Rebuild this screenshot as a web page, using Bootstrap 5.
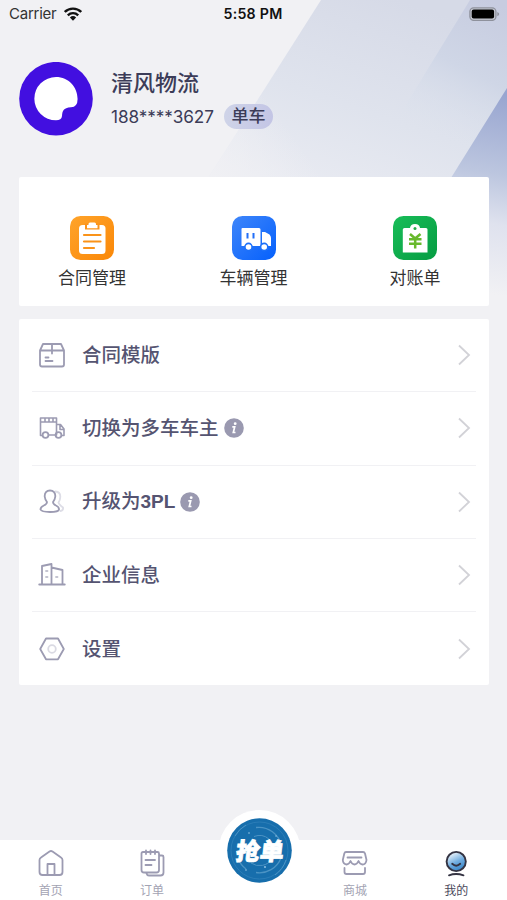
<!DOCTYPE html>
<html lang="zh-CN">
<head>
<meta charset="utf-8">
<meta name="viewport" content="width=device-width, initial-scale=1">
<title>我的</title>
<link href="https://cdn.jsdelivr.net/npm/bootstrap@5.3.0/dist/css/bootstrap.min.css" rel="stylesheet">
<style>
  body { font-family: "Liberation Sans", "Noto Sans CJK SC", sans-serif; background: #f1f1f4; color: #3c3c58; }
  svg { display: block; flex: none; }
  .screen { height: 900px; }
  .backdrop { z-index: 0; }
  .status { height: 28px; font: 15px/28px Inter, sans-serif; color: #333; padding: 0 7px 0 9px; }
  .clock { font-weight: 600; font-size: 14.2px; color: #111; left: 0; right: 1px; letter-spacing: .25px; }
  .profile { height: 149px; padding: 34px 19px 0; }
  .who { padding-left: 18px; padding-top: 5px; }
  .who-name { font-size: 22px; line-height: 33px; font-weight: 500; }
  .phone { font: 17.2px/25px Inter, sans-serif; letter-spacing: -.1px; width: 113px; white-space: nowrap; }
  .tag { width: 49px; height: 25px; border-radius: 13px; background: linear-gradient(90deg, #cfd4e8, #c3c5e5); font-size: 17px; line-height: 25px; font-weight: 500; }
  .panel { margin: 0 18px 0 19px; }
  .shortcuts { height: 129px; padding: 39px 40px 0 39px; border-radius: 2px; }
  .shortcut { width: 68px; color: #333; font-size: 17px; line-height: 24px; white-space: nowrap; }
  .shortcut span { margin-top: 7px; }
  .menu { margin-top: 13px; height: 366px; padding: 0 13px; border-radius: 2px; }
  .entry { height: 73.3px; padding: 0 5px 0 6px; border-bottom: 1px solid #f1f1f4; font-size: 19.5px; font-weight: 500; color: #555471; }
  .entry:last-child { border-bottom: 0; }
  .entry b { font-size: 19px; }
  .entry-text { margin-left: 16px; margin-right: 5px; line-height: 28px; }
  .stroke { fill: none; stroke: #9c9bb2; stroke-width: 1.8; stroke-linejoin: round; stroke-linecap: round; }
  .tabs { height: 60px; }
  .tab { flex: 1 1 0; padding-top: 8px; font-size: 12px; line-height: 18px; color: #a3a3b3; }
  .tab span { margin-top: 4px; }
  .tab.now { color: #4a4a5c; }
  .grab { width: 82px; height: 82px; left: 218px; top: -30px; }
</style>
<script src="https://cdn.jsdelivr.net/npm/bootstrap@5.3.0/dist/js/bootstrap.bundle.min.js"></script>
</head>
<body>
<div class="screen position-relative d-flex flex-column overflow-hidden">
  <svg class="backdrop position-absolute top-0 start-0" width="507" height="340" viewBox="0 0 507 340">
    <defs>
      <linearGradient id="b1" gradientUnits="userSpaceOnUse" x1="400" y1="0" x2="330" y2="200"><stop offset="0" stop-color="#d6dae7"/><stop offset=".55" stop-color="#dfe3ed"/><stop offset="1" stop-color="#e9ebf2"/></linearGradient>
      <linearGradient id="bl" gradientUnits="userSpaceOnUse" x1="205" y1="190" x2="290" y2="130"><stop offset="0" stop-color="#f1f1f4"/><stop offset="1" stop-color="#f1f1f4" stop-opacity="0"/></linearGradient>
      <linearGradient id="b2" gradientUnits="userSpaceOnUse" x1="490" y1="0" x2="425" y2="130"><stop offset="0" stop-color="#c7cce0"/><stop offset=".5" stop-color="#cfd6e6"/><stop offset="1" stop-color="#dde3ee" stop-opacity="0"/></linearGradient>
      <linearGradient id="b3" gradientUnits="userSpaceOnUse" x1="507" y1="95" x2="470" y2="290"><stop offset="0" stop-color="#98a5d0"/><stop offset=".4" stop-color="#bcc6df"/><stop offset=".65" stop-color="#dfe2ee"/><stop offset="1" stop-color="#f1f1f4"/></linearGradient>
    </defs>
    <path d="M321 0H507V230H175Z" fill="url(#b1)"/>
    <path d="M321 0H507V230H175Z" fill="url(#bl)"/>
    <path d="M470 0H507V180H360Z" fill="url(#b2)"/>
    <path d="M507 88V340H350Z" fill="url(#b3)"/>
  </svg>

  <header class="status position-relative d-flex align-items-center justify-content-between">
    <div class="d-flex align-items-center">
      <span style="letter-spacing:-.25px">Carrier</span>
      <svg class="ms-2" width="18" height="14" viewBox="0 0 18 14"><g fill="none" stroke="#111" stroke-width="2.4"><path d="M.8 5A11.6 11.6 0 0 1 17.2 5"/><path d="M3.8 8.3A7.4 7.4 0 0 1 14.2 8.3"/></g><path d="M9 13.7 5.9 10.4A4.5 4.5 0 0 1 12.1 10.4Z" fill="#111"/></svg>
    </div>
    <span class="clock position-absolute text-center">5:58 PM</span>
    <svg width="31" height="14" viewBox="0 0 31 14"><rect x=".9" y=".8" width="26" height="12.6" rx="3.8" fill="#c7cad4" stroke="#8e919c" stroke-width="1.3"/><rect x="2.7" y="2.6" width="22.4" height="9" rx="2" fill="#000"/><path d="M28.3 5V9.2Q30.2 8.3 30.2 7.1T28.3 5Z" fill="#8e919c"/></svg>
  </header>

  <section class="profile position-relative d-flex align-items-start">
    <svg width="74" height="74" viewBox="0 0 74 74"><circle cx="37" cy="36.7" r="36.8" fill="#420fe0"/><path d="M37 15C49.500 15 58.600 25 58.600 37Q58.600 45 52 45.300C44 46 43.500 49 43 54Q42.500 58.300 37 58.300A21.600 21.600 0 0 1 37 15Z" fill="#fff"/></svg>
    <div class="who">
      <div class="who-name">清风物流</div>
      <div class="d-flex align-items-center mt-1"><span class="phone">188****3627</span><span class="tag text-center">单车</span></div>
    </div>
  </section>

  <section class="panel shortcuts bg-white position-relative d-flex justify-content-between">
    <div class="shortcut d-flex flex-column align-items-center">
      <svg width="44" height="44" viewBox="0 0 44 44"><defs><linearGradient id="o" x2="1" y2="1"><stop stop-color="#ffa42b"/><stop offset="1" stop-color="#fa8707"/></linearGradient></defs><rect width="44" height="44" rx="10.500" fill="url(#o)"/><rect x="9" y="9" width="26.500" height="29" rx="3.500" fill="#fff"/><path d="M16 8.500H28.500V12.500H16Z" fill="#fb931a" stroke="#fb931a" stroke-width="2"/><path d="M18.500 9V8A1.500 1.500 0 0 1 20 6.500H24.500A1.500 1.500 0 0 1 26 8V9H27.500V12.200H17V9Z" fill="#fff"/><path d="M14 19H30.500M14 25.500H30.500M14 32H24" stroke="#fa9319" stroke-width="2.200" stroke-linecap="round"/></svg>
      <span>合同管理</span>
    </div>
    <div class="shortcut d-flex flex-column align-items-center">
      <svg width="44" height="44" viewBox="0 0 44 44"><defs><linearGradient id="u" x2="1" y2="1"><stop stop-color="#3f86fa"/><stop offset="1" stop-color="#0560fc"/></linearGradient></defs><rect width="44" height="44" rx="10.500" fill="url(#u)"/><path d="M10.500 12H27Q28.500 12 28.500 13.500V30H9.500V13Q9.500 12 10.500 12ZM30 16H33L37.500 18.500Q39 20 39 22V30H30Z" fill="#fff"/><path d="M15.500 17V22.500M21.500 17V22.500" stroke="#226ff8" stroke-width="2"/><g fill="#fff" stroke="#1c70f9" stroke-width="1.600"><circle cx="16.500" cy="31" r="3.600"/><circle cx="32.200" cy="31" r="3.600"/></g></svg>
      <span>车辆管理</span>
    </div>
    <div class="shortcut d-flex flex-column align-items-center">
      <svg width="44" height="44" viewBox="0 0 44 44"><defs><linearGradient id="g" x2="1" y2="1"><stop stop-color="#18bd58"/><stop offset="1" stop-color="#069c42"/></linearGradient></defs><rect width="44" height="44" rx="10.500" fill="url(#g)"/><path d="M11.500 12H17Q17.500 8 22 8T27 12H33Q34.500 12 34.500 13.500V36.500H9.800V13.500Q9.800 12 11.500 12Z" fill="#fff"/><circle cx="22" cy="12.500" r="1.500" fill="#24ac4c"/><path d="M17 18 22.200 22.500 27.500 18M16 23.300H28.500M16 27.800H28.500M22.200 22V32.500" fill="none" stroke="#68b92c" stroke-width="2.500"/></svg>
      <span>对账单</span>
    </div>
  </section>

  <section class="panel menu bg-white position-relative">
    <div class="entry d-flex align-items-center">
      <svg class="stroke" width="28" height="28" viewBox="0 0 28 28"><path d="M2 9.500 5 3H23L26 9.500V23.500Q26 25.500 24 25.500H4Q2 25.500 2 23.500ZM2 9.500H26M14 3V12.500M7.500 16.500H10.500M7.500 20H14.500"/></svg>
      <span class="entry-text">合同模版</span>
      <svg class="ms-auto" width="14" height="22" viewBox="0 0 14 22"><path d="M2 1.500 12 11 2 20.500" fill="none" stroke="#d2d2d7" stroke-width="1.800"/></svg>
    </div>
    <div class="entry d-flex align-items-center">
      <svg class="stroke" width="28" height="28" viewBox="0 0 28 28"><path d="M4 21.500H2.500V4H18.500V21H11M18.500 10.500H22.500L26 15V21.500H24M7 4V8M11 4V8M15 4V8M22 11V15.500H25.500M2.500 8H18.500" stroke-width="1.600"/><circle cx="7.500" cy="21" r="2.900"/><circle cx="20.500" cy="21" r="2.900"/></svg>
      <span class="entry-text">切换为多车车主</span>
      <svg width="20" height="20" viewBox="0 0 20 20"><circle cx="10" cy="10" r="9.800" fill="#9a99b0"/><circle cx="11.200" cy="5.700" r="1.400" fill="#fff"/><path d="M8.300 8.800H10.700L9.300 14.500H11.500" fill="none" stroke="#fff" stroke-width="1.700"/></svg>
      <svg class="ms-auto" width="14" height="22" viewBox="0 0 14 22"><path d="M2 1.500 12 11 2 20.500" fill="none" stroke="#d2d2d7" stroke-width="1.800"/></svg>
    </div>
    <div class="entry d-flex align-items-center">
      <svg class="stroke" width="28" height="28" viewBox="0 0 28 28"><path d="M17.500 3.500Q22.500 4 22.300 9 22.200 12 20.500 14.500 21 16.500 25 19.500 25.500 22.500 22.500 23" stroke="#dddde6"/><path d="M12 2.500C15.500 2.500 17.500 5 17.300 8.500Q17 11.500 15 14 15 16 18 17.500 21.200 19 21 21.500 20.500 24 12 24T2.500 21.500Q2.500 19 5.800 17.500 9 16 9 14 7 11.500 6.700 8.500C6.500 5 8.500 2.500 12 2.500Z"/></svg>
      <span class="entry-text">升级为<b>3PL</b></span>
      <svg width="20" height="20" viewBox="0 0 20 20"><circle cx="10" cy="10" r="9.800" fill="#9a99b0"/><circle cx="11.200" cy="5.700" r="1.400" fill="#fff"/><path d="M8.300 8.800H10.700L9.300 14.500H11.500" fill="none" stroke="#fff" stroke-width="1.700"/></svg>
      <svg class="ms-auto" width="14" height="22" viewBox="0 0 14 22"><path d="M2 1.500 12 11 2 20.500" fill="none" stroke="#d2d2d7" stroke-width="1.800"/></svg>
    </div>
    <div class="entry d-flex align-items-center">
      <svg class="stroke" width="28" height="28" viewBox="0 0 28 28"><path d="M1.200 23.500H26.800M4 23.500V5L13.500 3V23.500M13.500 6.500 24.500 9V23.500"/><path d="M8 10H9.500M8 16H9.500M18 16H19.500" stroke="#c4c4d1"/></svg>
      <span class="entry-text">企业信息</span>
      <svg class="ms-auto" width="14" height="22" viewBox="0 0 14 22"><path d="M2 1.500 12 11 2 20.500" fill="none" stroke="#d2d2d7" stroke-width="1.800"/></svg>
    </div>
    <div class="entry d-flex align-items-center">
      <svg class="stroke" width="28" height="28" viewBox="0 0 28 28"><path d="M8 3.500H20L25.800 14 20 24.300H8L2.200 14Z"/><circle cx="14" cy="14" r="3.800" stroke="#dadae3"/></svg>
      <span class="entry-text">设置</span>
      <svg class="ms-auto" width="14" height="22" viewBox="0 0 14 22"><path d="M2 1.500 12 11 2 20.500" fill="none" stroke="#d2d2d7" stroke-width="1.800"/></svg>
    </div>
  </section>

  <nav class="tabs bg-white position-relative d-flex mt-auto">
    <div class="tab d-flex flex-column align-items-center">
      <svg class="stroke" width="28" height="30" viewBox="0 0 28 30"><path d="M2.500 12Q2.500 10.500 4 9.500L12.500 3.500Q14 2.500 15.500 3.500L24 9.500Q25.500 10.500 25.500 12V24Q25.500 27 22.500 27H5.500Q2.500 27 2.500 24ZM10.500 27V16H17.500V27"/></svg>
      <span>首页</span>
    </div>
    <div class="tab d-flex flex-column align-items-center">
      <svg class="stroke" width="28" height="30" viewBox="0 0 28 30"><path d="M5 4H19.500Q21 4 21 5.500V22Q21 24.500 18.500 24.500H6Q3.500 24.500 3.500 22V5.500Q3.500 4 5 4ZM8 2.500V6M12.500 2.500V6M17 2.500V6M7.500 12H17M7.500 17H13.500M22 7.500H24Q25.500 7.500 25.500 9V24.500Q25.500 27.500 22.500 27.500H11Q9 27.500 8.500 25.500"/></svg>
      <span>订单</span>
    </div>
    <div class="tab"></div>
    <div class="tab d-flex flex-column align-items-center">
      <svg class="stroke" width="28" height="30" viewBox="0 0 28 30"><path d="M5 4H22Q23.500 4 24 5.500L25.500 12Q25 16.500 21.500 16.500 19 16.500 17.500 13 16 16.500 13.500 16.500T9.500 13Q8 16.500 5.500 16.500 2 16 1.800 12L3.300 5.500Q3.700 4 5 4ZM6.500 9.500H20.500M3.500 20V24Q3.500 26 5.500 26H22Q24 26 24 24V20"/></svg>
      <span>商城</span>
    </div>
    <div class="tab now d-flex flex-column align-items-center">
      <svg width="28" height="30" viewBox="0 0 28 30"><defs><linearGradient id="m" x1=".2" y1="0" x2=".7" y2="1"><stop stop-color="#fff"/><stop offset=".55" stop-color="#6facdf"/><stop offset="1" stop-color="#3483c8"/></linearGradient></defs><circle cx="14.200" cy="13.500" r="9.600" fill="url(#m)" stroke="#343342" stroke-width="1.900"/><path d="M10.200 15.800Q14.200 19.500 18.200 15.800M7 27.300Q14 24.800 21.500 27.300" fill="none" stroke="#343342" stroke-width="1.900" stroke-linecap="round"/></svg>
      <span>我的</span>
    </div>
    <svg class="grab position-absolute" viewBox="0 0 82 82"><circle cx="41.500" cy="41" r="41" fill="#fff"/><circle cx="41.500" cy="40.500" r="32.300" fill="#176eac"/><g fill="none" stroke="#4b93c4"><circle cx="41.500" cy="40.500" r="28.500" stroke="#2b7db7"/><path d="M38 17.500A23 23 0 0 1 63.500 36M20 48A23 23 0 0 0 28 59M38 62.500A23 23 0 0 0 63 48" stroke-width="1.300"/><path d="M36 26.500A15 15 0 0 1 51 29M33 53A15 15 0 0 0 54 49M17 26A29 29 0 0 1 28 15M57 65A29 29 0 0 0 68 50"/></g><g fill="#9bc9e7"><circle cx="31" cy="23" r=".8"/><circle cx="47" cy="57" r=".9"/><circle cx="28" cy="60" r=".8"/><circle cx="58" cy="26" r=".7"/></g><text x="0" y="0" transform="translate(41 49.500) skewX(-7)" text-anchor="middle" font-family="Noto Sans CJK SC, sans-serif" font-size="24" font-weight="900" fill="#fff" stroke="#fff" stroke-width=".8">抢单</text></svg>
  </nav>
</div>
</body>
</html>
